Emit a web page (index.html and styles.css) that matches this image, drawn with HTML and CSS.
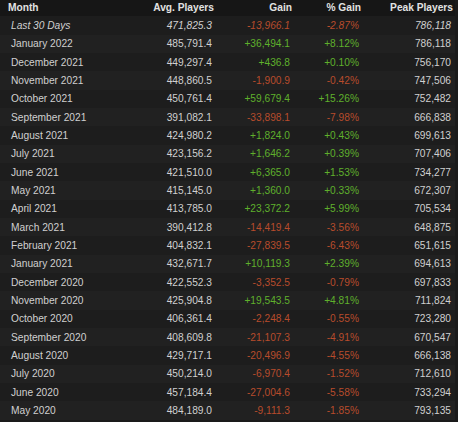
FILE: index.html
```html
<!DOCTYPE html>
<html>
<head>
<meta charset="utf-8">
<link rel="stylesheet" href="styles.css">
</head>
<body>
<table class="stats">
  <colgroup>
    <col class="c-month"><col class="c-avg"><col class="c-gain"><col class="c-pct"><col class="c-peak">
  </colgroup>
  <thead>
    <tr><th class="left">Month</th><th>Avg. Players</th><th>Gain</th><th>% Gain</th><th>Peak Players</th></tr>
  </thead>
  <tbody>
    <tr class="recent"><td class="left">Last 30 Days</td><td>471,825.3</td><td class="neg">-13,966.1</td><td class="neg">-2.87%</td><td>786,118</td></tr>
    <tr><td class="left">January 2022</td><td>485,791.4</td><td class="pos">+36,494.1</td><td class="pos">+8.12%</td><td>786,118</td></tr>
    <tr><td class="left">December 2021</td><td>449,297.4</td><td class="pos">+436.8</td><td class="pos">+0.10%</td><td>756,170</td></tr>
    <tr><td class="left">November 2021</td><td>448,860.5</td><td class="neg">-1,900.9</td><td class="neg">-0.42%</td><td>747,506</td></tr>
    <tr><td class="left">October 2021</td><td>450,761.4</td><td class="pos">+59,679.4</td><td class="pos">+15.26%</td><td>752,482</td></tr>
    <tr><td class="left">September 2021</td><td>391,082.1</td><td class="neg">-33,898.1</td><td class="neg">-7.98%</td><td>666,838</td></tr>
    <tr><td class="left">August 2021</td><td>424,980.2</td><td class="pos">+1,824.0</td><td class="pos">+0.43%</td><td>699,613</td></tr>
    <tr><td class="left">July 2021</td><td>423,156.2</td><td class="pos">+1,646.2</td><td class="pos">+0.39%</td><td>707,406</td></tr>
    <tr><td class="left">June 2021</td><td>421,510.0</td><td class="pos">+6,365.0</td><td class="pos">+1.53%</td><td>734,277</td></tr>
    <tr><td class="left">May 2021</td><td>415,145.0</td><td class="pos">+1,360.0</td><td class="pos">+0.33%</td><td>672,307</td></tr>
    <tr><td class="left">April 2021</td><td>413,785.0</td><td class="pos">+23,372.2</td><td class="pos">+5.99%</td><td>705,534</td></tr>
    <tr><td class="left">March 2021</td><td>390,412.8</td><td class="neg">-14,419.4</td><td class="neg">-3.56%</td><td>648,875</td></tr>
    <tr><td class="left">February 2021</td><td>404,832.1</td><td class="neg">-27,839.5</td><td class="neg">-6.43%</td><td>651,615</td></tr>
    <tr><td class="left">January 2021</td><td>432,671.7</td><td class="pos">+10,119.3</td><td class="pos">+2.39%</td><td>694,613</td></tr>
    <tr><td class="left">December 2020</td><td>422,552.3</td><td class="neg">-3,352.5</td><td class="neg">-0.79%</td><td>697,833</td></tr>
    <tr><td class="left">November 2020</td><td>425,904.8</td><td class="pos">+19,543.5</td><td class="pos">+4.81%</td><td>711,824</td></tr>
    <tr><td class="left">October 2020</td><td>406,361.4</td><td class="neg">-2,248.4</td><td class="neg">-0.55%</td><td>723,280</td></tr>
    <tr><td class="left">September 2020</td><td>408,609.8</td><td class="neg">-21,107.3</td><td class="neg">-4.91%</td><td>670,547</td></tr>
    <tr><td class="left">August 2020</td><td>429,717.1</td><td class="neg">-20,496.9</td><td class="neg">-4.55%</td><td>666,138</td></tr>
    <tr><td class="left">July 2020</td><td>450,214.0</td><td class="neg">-6,970.4</td><td class="neg">-1.52%</td><td>712,610</td></tr>
    <tr><td class="left">June 2020</td><td>457,184.4</td><td class="neg">-27,004.6</td><td class="neg">-5.58%</td><td>733,294</td></tr>
    <tr><td class="left">May 2020</td><td>484,189.0</td><td class="neg">-9,111.3</td><td class="neg">-1.85%</td><td>793,135</td></tr>
  </tbody>
</table>
</body>
</html>
```
FILE: styles.css
```css
html, body {
  margin: 0;
  padding: 0;
  background: #1a1a1a;
  overflow: hidden;
}
.stats {
  width: 455px;
  margin-top: -2px;
  border-collapse: collapse;
  table-layout: fixed;
  font-family: "Liberation Sans", Arial, sans-serif;
  font-size: 10.2px;
  color: #d0d0d0;
}
.c-month { width: 120px; }
.c-avg { width: 96px; }
.c-gain { width: 78px; }
.c-pct { width: 69px; }
.c-peak { width: 92px; }
.stats th {
  height: 18.45px;
  padding: 0 2px 0 0;
  text-align: right;
  font-weight: bold;
  color: #e2e2e2;
  background: #161616;
  white-space: nowrap;
}
.stats th.left {
  text-align: left;
  padding-left: 8px;
}
.stats td {
  height: 18.34px;
  padding: 0 4px 0 0;
  text-align: right;
  white-space: nowrap;
}
.stats td.left {
  text-align: left;
  padding-left: 11px;
}
.stats tbody tr:nth-child(odd) { background: #1d1d1d; }
.stats tbody tr:nth-child(even) { background: #212121; }
.recent td { font-style: italic; }
.pos { color: #5fb02c; }
.neg { color: #b84c2c; }
```
